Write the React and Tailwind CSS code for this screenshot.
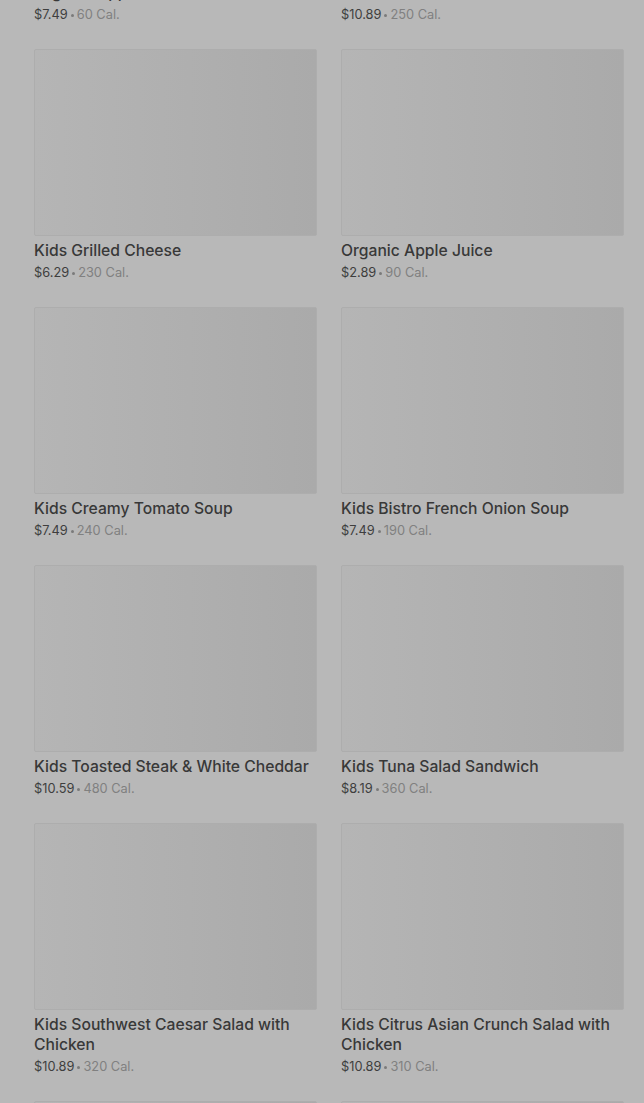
import React from 'react'

// menu items behind the dimmed overlay
const items = [
  { name: 'Organic Applesauce', price: '$7.49', cal: '60 Cal.' },
  { name: 'Kids Mac & Cheese', price: '$10.89', cal: '250 Cal.' },
  { name: 'Kids Grilled Cheese', price: '$6.29', cal: '230 Cal.' },
  { name: 'Organic Apple Juice', price: '$2.89', cal: '90 Cal.' },
  { name: 'Kids Creamy Tomato Soup', price: '$7.49', cal: '240 Cal.' },
  { name: 'Kids Bistro French Onion Soup', price: '$7.49', cal: '190 Cal.' },
  { name: 'Kids Toasted Steak & White Cheddar', price: '$10.59', cal: '480 Cal.' },
  { name: 'Kids Tuna Salad Sandwich', price: '$8.19', cal: '360 Cal.' },
  { name: 'Kids Southwest Caesar Salad with Chicken', price: '$10.89', cal: '320 Cal.' },
  { name: 'Kids Citrus Asian Crunch Salad with Chicken', price: '$10.89', cal: '310 Cal.' },
  { name: 'Kids Chicken Noodle Soup', price: '$7.49', cal: '110 Cal.' },
  { name: 'Kids Turkey Sandwich', price: '$8.19', cal: '330 Cal.' },
]

function MenuCard({ item }) {
  return (
    <div className="flex flex-col">
      <div className="h-[187px] rounded-[2px] border border-[#adadad] bg-linear-to-r from-[#b5b5b5] to-[#aaaaaa]" />
      <div className="mt-[5px] text-[15.7px] leading-[20px] font-medium text-[#383838]">
        {item.name}
      </div>
      <div className="mt-[3px] h-[18px] flex items-center text-[12.8px] leading-[18px] text-[#3e3e3e]">
        <span>{item.price}</span>
        <span className="w-[3px] h-[3px] rounded-full bg-[#7a7a7a] mx-[3px]" />
        <span className="text-[#808080]">{item.cal}</span>
      </div>
    </div>
  )
}

export default function App() {
  return (
    <div
      className="h-[1103px] overflow-hidden bg-[#b8b8b8]"
      style={{ fontFamily: 'Inter, "Noto Sans", sans-serif' }}
    >
      <div className="mt-[-209px] pl-[34px] grid grid-cols-[283px_283px] gap-x-[24px] gap-y-[25px]">
        {items.map((item, i) => (
          <MenuCard key={i} item={item} />
        ))}
      </div>
    </div>
  )
}
